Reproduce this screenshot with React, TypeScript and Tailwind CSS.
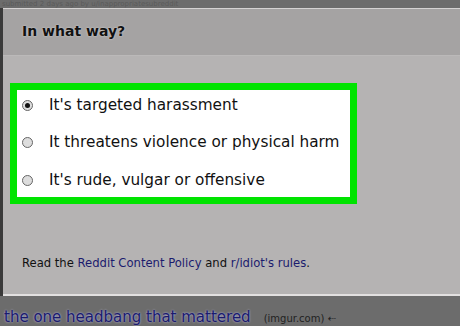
import React, { useState } from 'react';

const options = [
  "It's targeted harassment",
  'It threatens violence or physical harm',
  "It's rude, vulgar or offensive",
];

const App: React.FC = () => {
  const [selected, setSelected] = useState<number>(0);

  return (
    <div className="w-[460px] h-[326px] overflow-hidden bg-[#6c6c6c] flex flex-col font-['DejaVu_Sans',sans-serif]">
      {/* faded page behind the overlay */}
      <div className="h-[9px] overflow-hidden pl-[2px] text-[7px] leading-[9px] text-[#5a5a5a] whitespace-nowrap">
        submitted 2 days ago by u/inappropriatesubreddit
      </div>

      <div className="flex">
        <div className="w-[3px] bg-[#3a3a3a]" />
        <div className="flex-1 flex flex-col border-t border-[#d4d2d2] border-b-2 border-b-[#e2e0e0]">
          <div className="h-[47px] bg-[#a5a3a3] border-b border-[#bbb9b9] flex items-center pl-[19px] pb-[2px]">
            <span className="text-[14px] font-bold text-[#111] [text-shadow:0_0_2px_#ddd]">In what way?</span>
          </div>

          <div className="h-[238px] bg-[#b5b3b3] flex flex-col pt-[27px]">
            <div className="ml-[7px] w-[347px] h-[121px] border-[7px] border-[#00e400]">
              <div className="h-full bg-white flex flex-col gap-[13.5px] pt-[3px] pl-[5px]">
                {options.map((text, i) => (
                  <label
                    key={text}
                    onClick={() => setSelected(i)}
                    className="h-[24px] flex items-center gap-[16px] text-[15.3px] text-[#111] cursor-pointer"
                  >
                    <span className="w-[11px] h-[11px] shrink-0 rounded-full border border-[#666] bg-[#ddd] flex items-center justify-center">
                      {selected === i && <span className="w-[5px] h-[5px] rounded-full bg-[#111]" />}
                    </span>
                    <span>{text}</span>
                  </label>
                ))}
              </div>
            </div>

            <p className="mt-[51px] ml-[19px] text-[11.6px] text-[#111] whitespace-nowrap">
              Read the <span className="text-[#1b1b6e]">Reddit Content Policy</span> and{' '}
              <span className="text-[#1b1b6e]">r/idiot's rules</span>.
            </p>
          </div>
        </div>
      </div>

      <div className="flex items-end gap-[13px] pl-[4px] pt-[12px] whitespace-nowrap">
        <span className="text-[15px] leading-[18px] text-[#1b1b6b] [text-shadow:0_0_2px_#e6e6ff,0_0_1px_#1b1b6b]">
          the one headbang that mattered
        </span>
        <span className="text-[10px] text-[#222]">(imgur.com) ⇠</span>
      </div>
    </div>
  );
};

export default App;
